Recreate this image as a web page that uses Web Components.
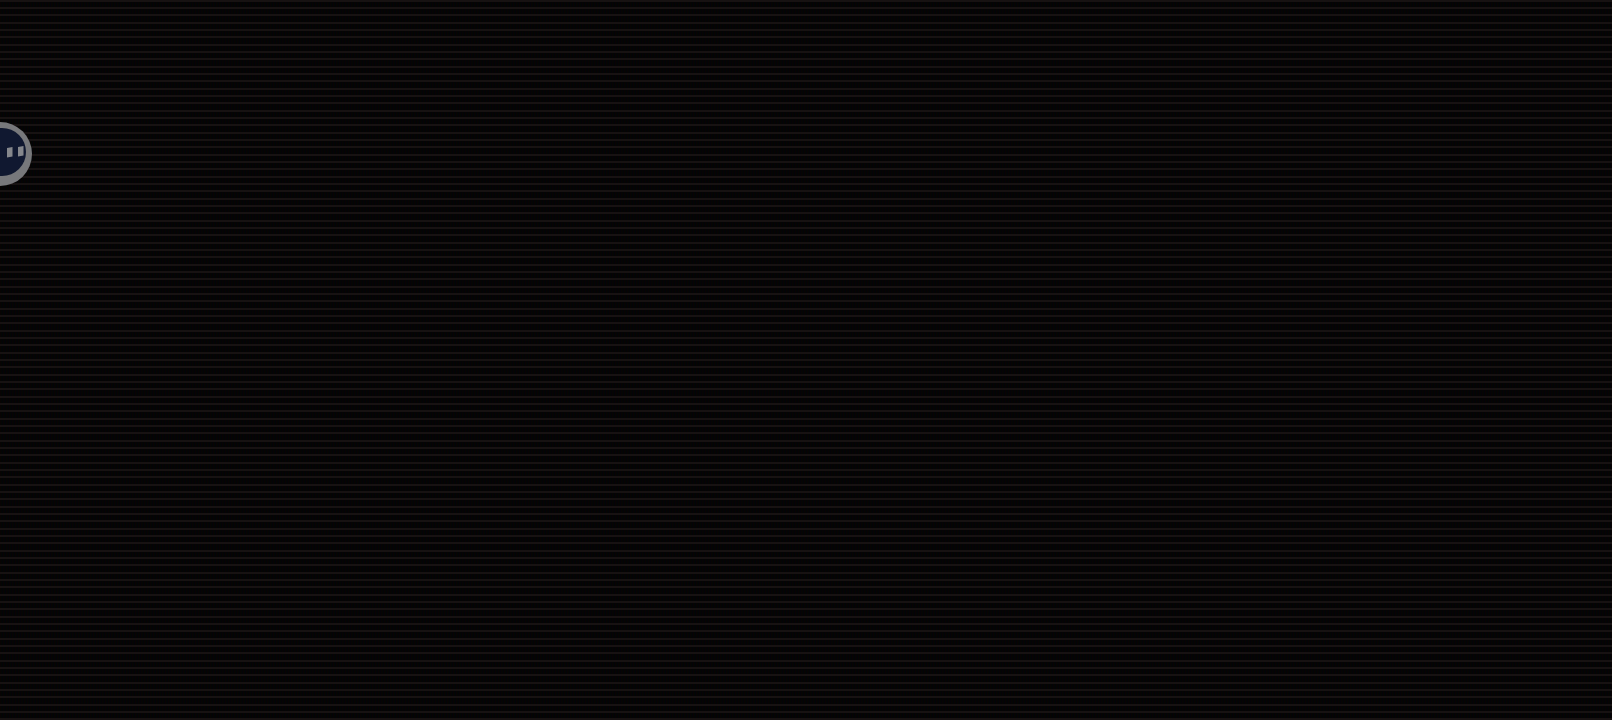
<!DOCTYPE html>
<html>
<head>
<meta charset="utf-8">
<style>
  html, body { margin: 0; height: 100%; background: #000; overflow: hidden; }
</style>
</head>
<body>
<crt-screen>
  <round-bot></round-bot>
</crt-screen>
<script>
customElements.define('crt-screen', class extends HTMLElement {
  constructor() {
    super();
    let shadowRoot = this.attachShadow({mode: 'open'});
    shadowRoot.innerHTML = `
      <style>
      :host {
        display: block;
        position: relative;
        width: 100%;
        height: 100vh;
        overflow: hidden;
        background-color: #040404;
        background-image:
          linear-gradient(180deg,
            #171212 0 2px, transparent 2px 7px,
            #171212 7px 9px, transparent 9px 14px,
            #171212 14px 16px, transparent 16px 22px),
          linear-gradient(90deg, #080303 0 1px, #030603 1px 2px, #030308 2px 3px);
        background-size: 100% 22px, 3px 2px;
      }
      </style>
      <slot></slot>`;
  }
});

customElements.define('round-bot', class extends HTMLElement {
  constructor() {
    super();
    let shadowRoot = this.attachShadow({mode: 'open'});
    shadowRoot.innerHTML = `
      <style>
      :host {
        position: absolute;
        left: -32px;
        top: 122px;
        width: 64px;
        height: 64px;
        display: block;
      }
      svg { display: block; }
      </style>
      <svg width="64" height="64" viewBox="-32 122 64 64">
        <circle cx="0" cy="154" r="32" fill="#77787b"/>
        <circle cx="2" cy="152" r="24" fill="#101830"/>
        <path d="M7 148l5.500 -1v9.500l-5.500 1z" fill="#85878c"/>
        <path d="M18 147l5.500 -1v9.500l-5.500 1z" fill="#85878c"/>
      </svg>`;
  }
});
</script>
</body>
</html>
